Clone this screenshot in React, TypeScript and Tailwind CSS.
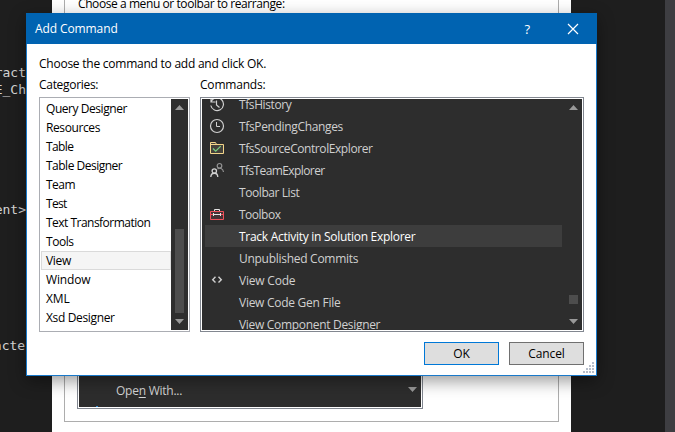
import type { ReactNode } from "react";

const categories: [string, string][] = [
  ["Query Designer", "tracking-[-0.45px]"],
  ["Resources", "tracking-[-0.4px]"],
  ["Table", "tracking-[-0.6px]"],
  ["Table Designer", "tracking-[-0.5px]"],
  ["Team", "tracking-[-0.5px]"],
  ["Test", "tracking-[-0.7px]"],
  ["Text Transformation", "tracking-[-0.52px]"],
  ["Tools", "tracking-[-0.45px]"],
  ["View", "tracking-[-0.3px]"],
  ["Window", "tracking-[-0.15px]"],
  ["XML", "tracking-[-0.1px]"],
  ["Xsd Designer", "tracking-[-0.35px]"],
];

function HistoryIcon() {
  return (
    <svg width="16" height="16" viewBox="0 0 16 16" fill="none" stroke="#d0d0d0" strokeWidth="1.2">
      <path d="M2.3 5.4A6.4 6.4 0 1 1 1.8 9.5M2 2v4h4.500M7.500 4.500v4.500l3 2.500" />
    </svg>
  );
}

function ClockIcon() {
  return (
    <svg width="16" height="16" viewBox="0 0 16 16" fill="none" stroke="#d0d0d0">
      <circle cx="8" cy="8" r="6.5" strokeWidth="1.2" />
      <path d="M7.500 4v4.500H11" />
    </svg>
  );
}

function SourceIcon() {
  return (
    <svg width="16" height="16" viewBox="0 0 16 16" fill="none">
      <path d="M1.500 13.500v-11h5l1 2h7v9z" fill="#45423b" stroke="#f3d58a" />
      <path d="M1.500 4.500h7" stroke="#f3d58a" />
      <path d="m4 8.500 2.700 2.700 5-5" stroke="#79cf83" strokeWidth="1.2" />
    </svg>
  );
}

function TeamIcon() {
  return (
    <svg width="16" height="16" viewBox="0 0 16 16" fill="none">
      <g stroke="#929292" strokeWidth="1.200">
        <circle cx="10.500" cy="3.800" r="2.300" />
        <path d="M8.500 7c2-1.500 5.500-.7 6 3" />
      </g>
      <g stroke="#d2d2d2" strokeWidth="1.300">
        <circle cx="5.300" cy="9" r="2.200" />
        <path d="M1.800 15c.2-5 6.800-5 7 0" />
      </g>
    </svg>
  );
}

function ToolboxIcon() {
  return (
    <svg width="16" height="16" viewBox="0 0 16 16" fill="none">
      <path d="M1.500 5.500h13v8h-13zM1.500 8.500h13" fill="#453235" stroke="#f0525c" />
      <path d="M5.500 5V3.500h5V5M4.500 7v3M11.500 7v3M5 8.500h6" stroke="#e4e4e4" />
    </svg>
  );
}

function CodeIcon() {
  return (
    <svg width="16" height="16" viewBox="0 0 16 16" fill="none" stroke="#d0d0d0" strokeWidth="1.400">
      <path d="M6.500 4.800 3.700 7.700l2.800 2.900M9.500 4.800l2.800 2.900-2.800 2.900" />
    </svg>
  );
}

const commands: { label: string; icon?: ReactNode; tracking: string; selected?: boolean }[] = [
  { label: "TfsHistory", icon: <HistoryIcon />, tracking: "tracking-[-0.4px]" },
  { label: "TfsPendingChanges", icon: <ClockIcon />, tracking: "tracking-[-0.35px]" },
  { label: "TfsSourceControlExplorer", icon: <SourceIcon />, tracking: "tracking-[-0.42px]" },
  { label: "TfsTeamExplorer", icon: <TeamIcon />, tracking: "tracking-[-0.6px]" },
  { label: "Toolbar List", tracking: "tracking-[-0.42px]" },
  { label: "Toolbox", icon: <ToolboxIcon />, tracking: "tracking-[-0.5px]" },
  { label: "Track Activity in Solution Explorer", tracking: "tracking-[-0.28px]", selected: true },
  { label: "Unpublished Commits", tracking: "tracking-[-0.28px]" },
  { label: "View Code", icon: <CodeIcon />, tracking: "tracking-[-0.2px]" },
  { label: "View Code Gen File", tracking: "tracking-[-0.27px]" },
  { label: "View Component Designer", tracking: "tracking-[-0.31px]" },
];

function Arrow({ down = false }: { down?: boolean }) {
  return (
    <svg width="9" height="5" viewBox="0 0 9 5" className="shrink-0">
      <path d={down ? "M0 0h9L4.500 5z" : "M0 5h9L4.500 0z"} fill="#999" />
    </svg>
  );
}

function CodeBackdrop() {
  return (
    <div className="flex w-[52px] shrink-0 flex-col font-['DejaVu_Sans_Mono','Liberation_Mono',monospace] text-[13px] leading-[17px] text-[#d4d4d4]">
      <div className="flex w-[26px] flex-col items-end whitespace-pre pt-16">
        <span>ract</span>
        <span>E_Ch</span>
        <span className="mt-[103px]">ent&gt;</span>
        <span className="mt-[119px] -mr-[7px]">acter</span>
      </div>
    </div>
  );
}

function CustomizeWindow() {
  return (
    <div className="flex h-[432px] w-[519px] shrink-0 flex-col bg-white px-3">
      <div className="flex h-[422px] w-[495px] flex-col justify-between border border-t-0 border-[#adadad] pl-3">
        <div className="-mt-[5px] pl-px leading-[18px] tracking-[-0.42px]">Choose a menu or toolbar to rearrange:</div>
        <div className="mb-3 h-[50px] w-[346px] border border-[#828790] p-px">
          <div className="relative flex h-full items-start justify-between bg-[#2d2d2d] pl-[37px] pr-1 pt-[21px] text-[#d6d6d6]">
            <span className="leading-[18px] tracking-[-0.25px]">
              Ope<u className="underline-offset-2">n</u> With...
            </span>
            <div className="pt-[5px] leading-none"><Arrow down /></div>
            <i className="absolute bottom-0 left-[17px] h-px w-[2px] bg-[#3a8cd0]" />
          </div>
        </div>
      </div>
    </div>
  );
}

function AddCommandDialog() {
  return (
    <section className="absolute left-[26px] top-[13px] flex h-[363px] w-[571px] flex-col border border-[#1979ca] bg-white shadow-[0_5px_16px_rgba(0,0,0,0.4)]">
      <header className="-mx-px -mt-px flex h-[31px] shrink-0 items-center bg-[#0063b1] pl-[9px] pr-[18px] text-white">
        <h1 className="flex-1 tracking-[-0.1px]">Add Command</h1>
        <span className="mr-[37px] text-[13px]">?</span>
        <svg width="12" height="12" viewBox="0 0 12 12" stroke="white" strokeWidth="1.200">
          <path d="m1 1 10 10M11 1 1 11" />
        </svg>
      </header>
      <div className="px-3 pt-[11px]">
        <p className="leading-[18px] tracking-[-0.24px]">Choose the command to add and click OK.</p>
        <div className="mt-[3px] flex gap-[10px]">
          <div className="w-[151px]">
            <div className="h-[21px] leading-[18px] tracking-[-0.3px]">Categories:</div>
            <div className="flex h-[235px] border border-[#abadb3] p-px">
              <ul className="flex-1">
                {categories.map(([name, tracking]) => (
                  <li
                    key={name}
                    className={`flex h-[19px] items-center border pl-1 ${tracking} ${
                      name === "View" ? "border-[#dadada] bg-[#f5f5f5]" : "border-transparent"
                    }`}
                  >
                    {name}
                  </li>
                ))}
              </ul>
              <div className="flex w-[17px] flex-col items-center bg-[#2e2e2e] py-[6px]">
                <Arrow />
                <div className="mt-auto mb-[6px] h-[84px] w-[9px] bg-[#4d4d4d]" />
                <Arrow down />
              </div>
            </div>
          </div>
          <div className="w-[384px]">
            <div className="h-[21px] leading-[18px] tracking-[-0.2px]">Commands:</div>
            <div className="flex h-[235px] border border-[#828790] p-px">
              <div className="flex flex-1 overflow-hidden bg-[#2d2d2d] pl-[3px] text-[#d0d0d0]">
                <ul className="-mt-[6px] w-[357px]">
                  {commands.map(({ label, icon, tracking, selected }) => (
                    <li
                      key={label}
                      className={`flex h-[22px] items-center pl-1 ${selected ? "bg-[#3d3d3d] text-white" : ""}`}
                    >
                      <span className="w-[30px]">{icon}</span>
                      <span className={`pt-[2px] ${tracking}`}>{label}</span>
                    </li>
                  ))}
                </ul>
                <div className="ml-[7px] flex w-[9px] flex-col py-[6px]">
                  <Arrow />
                  <div className="mt-auto mb-[15px] h-[9px] bg-[#4d4d4d]" />
                  <Arrow down />
                </div>
              </div>
            </div>
          </div>
        </div>
        <div className="mt-[10px] flex justify-end gap-[10px]">
          <button className="h-[23px] w-[75px] border border-[#0078d7] bg-[#dedede]">OK</button>
          <button className="h-[23px] w-[75px] border border-[#707070] bg-[#dedede] tracking-[-0.1px]">Cancel</button>
        </div>
      </div>
      <svg className="absolute bottom-[2px] right-[2px]" width="11" height="11" viewBox="0 0 11 11" fill="#b6bdca">
        <path d="M9 0h2v2H9zM6 3h2v2H6zM9 3h2v2H9zM3 6h2v2H3zM6 6h2v2H6zM9 6h2v2H9zM0 9h2v2H0zM3 9h2v2H3zM6 9h2v2H6zM9 9h2v2H9z" />
      </svg>
    </section>
  );
}

export default function App() {
  return (
    <main className="relative flex h-[432px] w-[675px] overflow-hidden whitespace-nowrap bg-[#1e1e1e] font-['Open_Sans','Noto_Sans',sans-serif] text-[12px] leading-4 text-black">
      <CodeBackdrop />
      <CustomizeWindow />
      <div className="ml-auto w-[10px] bg-[#3e3e42]" />
      <AddCommandDialog />
    </main>
  );
}
